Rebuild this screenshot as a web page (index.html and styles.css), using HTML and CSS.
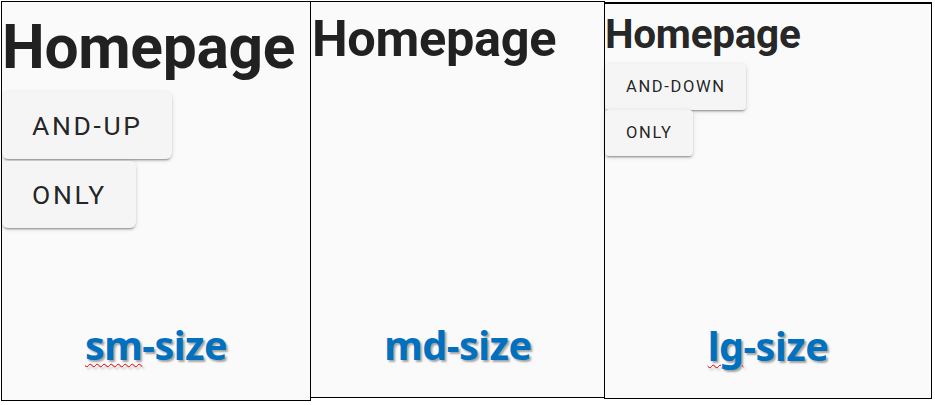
FILE: index.html
```html
<!DOCTYPE html>
<html>
<head>
<meta charset="utf-8">
<link rel="stylesheet" href="styles.css">
</head>
<body>
<div class="shots">
  <section class="panel panel-sm">
    <h1 class="title">Homepage</h1>
    <div class="btns">
      <button class="btn">AND-UP</button>
      <button class="btn">ONLY</button>
    </div>
    <div class="label"><span class="typo">sm</span>-size</div>
  </section>
  <section class="panel panel-md">
    <h1 class="title">Homepage</h1>
    <div class="label">md-size</div>
  </section>
  <section class="panel panel-lg">
    <h1 class="title">Homepage</h1>
    <div class="btns">
      <button class="btn">AND-DOWN</button>
      <button class="btn">ONLY</button>
    </div>
    <div class="label"><span class="typo">lg</span>-size</div>
  </section>
</div>
</body>
</html>
```
FILE: styles.css
```css
html, body {
  margin: 0;
  padding: 0;
  background: #ffffff;
}
.shots {
  display: flex;
  align-items: flex-start;
  padding: 1px 0 0 1px;
}
.panel {
  box-sizing: border-box;
  background: #fafafa;
  border: 1px solid #000;
  display: flex;
  flex-direction: column;
  align-items: flex-start;
  font-family: Roboto, "Noto Sans", sans-serif;
  color: rgba(0, 0, 0, 0.87);
}
.panel-sm {
  width: 310px;
  height: 400px;
  padding-left: 0;
}
.panel-md {
  width: 295px;
  height: 397px;
  margin-left: -1px;
  padding-left: 1px;
}
.panel-lg {
  width: 328px;
  height: 397px;
  margin-left: -1px;
  margin-top: 1px;
  border-top-width: 2px;
  padding-left: 0;
}
.title {
  margin: 0;
  font-weight: 700;
  line-height: 1;
  letter-spacing: -0.3px;
}
.panel-sm .title { font-size: 60.5px; margin-top: 16px; }
.panel-md .title { font-size: 50.5px; margin-top: 12px; }
.panel-lg .title { font-size: 40.5px; margin-top: 10px; }

.btns {
  display: flex;
  flex-direction: column;
  align-items: flex-start;
}
.btn {
  border: 0;
  margin: 0;
  background: #f5f5f5;
  border-radius: 5px;
  font-family: Roboto, sans-serif;
  font-weight: 400;
  color: rgba(0, 0, 0, 0.87);
  letter-spacing: 0.1em;
  text-transform: uppercase;
  box-shadow: 0 3px 1px -2px rgba(0,0,0,.2), 0 2px 2px 0 rgba(0,0,0,.14), 0 1px 5px 0 rgba(0,0,0,.12);
  text-align: left;
}
.panel-sm .btns { margin-top: 13px; gap: 2px; }
.panel-sm .btn {
  font-size: 26.5px;
  height: 67px;
  padding: 0 29px 0 30px;
  border-radius: 6px;
}
.panel-lg .btns { margin-top: 9px; gap: 0; }
.panel-lg .btn {
  font-size: 16.5px;
  height: 46px;
  padding: 0 20px 0 21px;
  border-radius: 4px;
}
.label {
  margin-top: auto;
  align-self: center;
  font-family: "Noto Sans", "Open Sans", sans-serif;
  font-weight: 700;
  font-size: 39.5px;
  line-height: 1;
  letter-spacing: -0.5px;
  color: #0070c0;
  text-shadow: 2px 2px 2px rgba(0, 0, 0, 0.35);
}
.panel-sm .label { padding-bottom: 35px; }
.panel-md .label { padding-bottom: 32px; }
.panel-lg .label { padding-bottom: 32px; }
.typo {
  text-decoration: underline wavy #e00000;
  text-decoration-thickness: 1px;
  text-underline-offset: 3px;
}
```
